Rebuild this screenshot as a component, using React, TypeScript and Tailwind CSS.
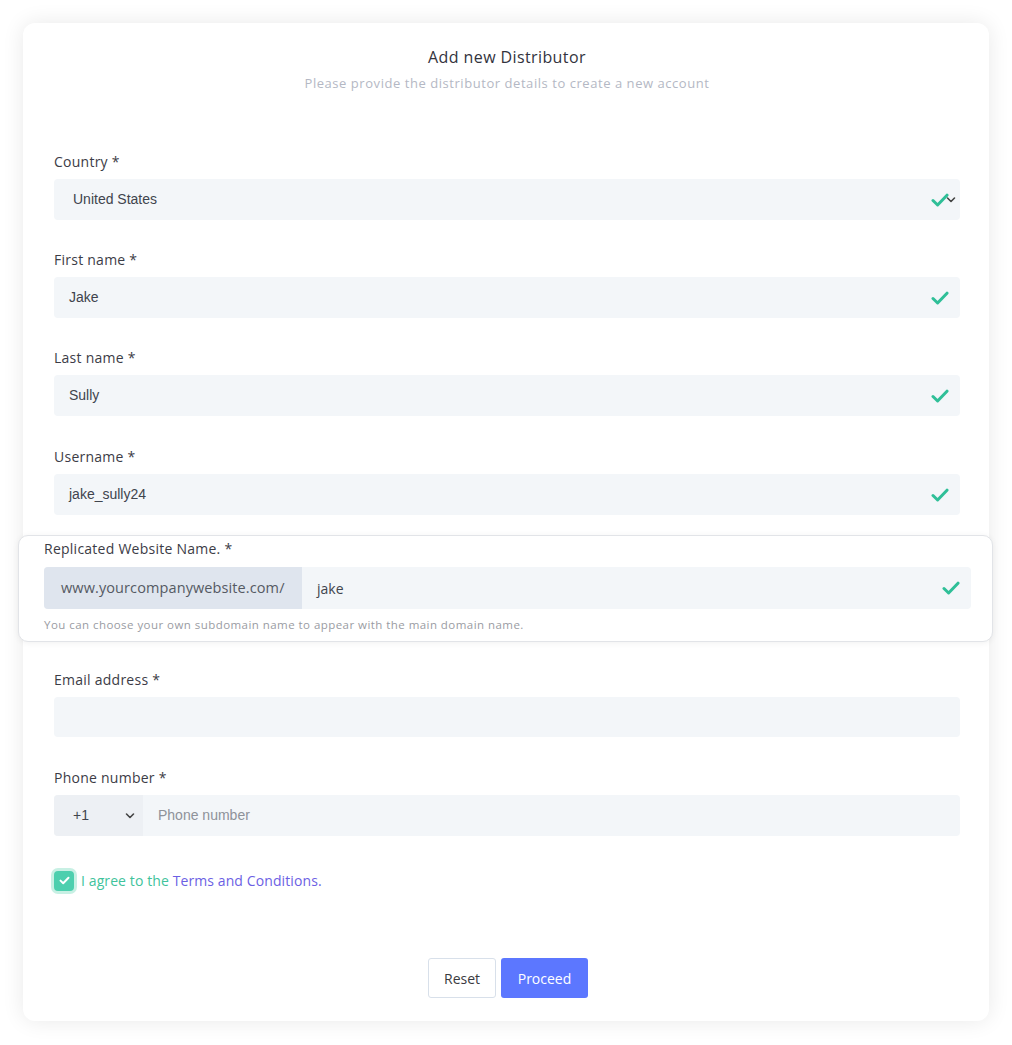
import React from "react";

const poppins = { fontFamily: "'Open Sans', 'Noto Sans', sans-serif" };

function Check({ className = "" }: { className?: string }) {
  return (
    <svg className={className} width="18" height="14" viewBox="0 0 18 14" fill="none">
      <path d="M2 7.5 L6.6 12 L16 2.2" stroke="#2fbf98" strokeWidth="3" strokeLinecap="round" strokeLinejoin="round" />
    </svg>
  );
}

function Label({ children }: { children: React.ReactNode }) {
  return (
    <div className="text-[14px] tracking-[0.25px] leading-[20px] text-[#3c3c46] mb-[7px] font-['Open_Sans',sans-serif]">
      {children}
    </div>
  );
}

function Field({ label, value, mt }: { label: string; value?: string; mt: string }) {
  return (
    <div className={mt}>
      <Label>{label}</Label>
      <div className="h-[41px] rounded-[4px] bg-[#f3f6f9] flex items-center pl-[15px] pr-[11px]">
        <span className="flex-1 text-[14px] text-[#40444d] font-['Liberation_Sans',Arial,sans-serif]">{value}</span>
        {value !== undefined && <Check />}
      </div>
    </div>
  );
}

export default function App() {
  return (
    <div className="bg-white p-[23px] w-[1012px] min-h-[1045px]">
      <div className="w-[966px] rounded-[12px] bg-white shadow-[0_0_22px_rgba(0,0,0,0.09)] pt-[22px] pb-[23px] pl-[31px] pr-[29px]">
        <div className="text-center" style={poppins}>
          <div className="text-[16px] tracking-[0.4px] leading-[24px] font-medium text-[#33333d]">Add new Distributor</div>
          <div className="text-[13px] tracking-[0.55px] leading-[20px] mt-[4px] text-[#b4b8c4]">
            Please provide the distributor details to create a new account
          </div>
        </div>

        <div className="mt-[59px]">
          <Label>Country *</Label>
          <div className="h-[41px] rounded-[4px] bg-[#f3f6f9] flex items-center pl-[19px] pr-[4px] relative">
            <span className="flex-1 text-[14px] text-[#40444d] font-['Liberation_Sans',Arial,sans-serif]">United States</span>
            <svg className="absolute right-[4px] top-[17px]" width="10" height="8" viewBox="0 0 10 8" fill="none">
              <path d="M1.5 2 L5 5.5 L8.5 2" stroke="#444" strokeWidth="1.6" strokeLinecap="round" strokeLinejoin="round" />
            </svg>
            <Check className="relative mr-[7px]" />
          </div>
        </div>

        <Field label="First name *" value="Jake" mt="mt-[30px]" />
        <Field label="Last name *" value="Sully" mt="mt-[30px]" />
        <Field label="Username *" value="jake_sully24" mt="mt-[31px]" />

        <div className="mt-[20px] ml-[-36px] mr-[-33px] rounded-[10px] border border-[#e2e4e8] bg-white shadow-[0_1px_6px_rgba(0,0,0,0.06)] pt-[3px] pb-[8px] pl-[25px] pr-[21px]">
          <div className="text-[14px] tracking-[0.25px] leading-[20px] text-[#3c3c46] mb-[8px] font-['Open_Sans',sans-serif]">
            Replicated Website Name. *
          </div>
          <div className="h-[42px] flex rounded-[4px] overflow-hidden bg-[#f3f6f9]">
            <div className="w-[258px] bg-[#dfe5ee] flex items-center pl-[17px] text-[14.5px] tracking-[0.1px] text-[#555a63] font-['Open_Sans',sans-serif]">
              www.yourcompanywebsite.com/
            </div>
            <div className="flex-1 flex items-center pl-[15px] pr-[11px]">
              <span className="flex-1 text-[14px] text-[#40444d] font-['Open_Sans',sans-serif]">jake</span>
              <Check />
            </div>
          </div>
          <div className="mt-[8px] text-[11.5px] tracking-[0.45px] leading-[16px] text-[#9a9ca3] font-['Open_Sans',sans-serif]">
            You can choose your own subdomain name to appear with the main domain name.
          </div>
        </div>

        <div className="mt-[28px]">
          <Label>Email address *</Label>
          <div className="h-[40px] rounded-[4px] bg-[#f3f6f9]" />
        </div>

        <div className="mt-[31px]">
          <Label>Phone number *</Label>
          <div className="h-[41px] rounded-[4px] bg-[#f3f6f9] flex overflow-hidden">
            <div className="w-[89px] bg-[#edf0f4] flex items-center pl-[19px] pr-[8px]">
              <span className="flex-1 text-[14px] text-[#40444d] font-['Liberation_Sans',Arial,sans-serif]">+1</span>
              <svg width="10" height="8" viewBox="0 0 10 8" fill="none">
                <path d="M1.5 2 L5 5.5 L8.5 2" stroke="#444" strokeWidth="1.6" strokeLinecap="round" strokeLinejoin="round" />
              </svg>
            </div>
            <div className="flex-1 flex items-center pl-[15px] text-[14px] text-[#8e929a] font-['Liberation_Sans',Arial,sans-serif]">
              Phone number
            </div>
          </div>
        </div>

        <div className="mt-[34px] flex items-center">
          <div className="w-[20px] h-[20px] rounded-[4px] bg-[#4dcfae] ring-[3px] ring-[#c8f0e4] flex items-center justify-center">
            <svg width="11" height="9" viewBox="0 0 11 9" fill="none">
              <path d="M1.5 4.6 L4.2 7.2 L9.5 1.8" stroke="white" strokeWidth="2" strokeLinecap="round" strokeLinejoin="round" />
            </svg>
          </div>
          <span className="ml-[7px] text-[14px] tracking-[0.1px] font-['Open_Sans',sans-serif]">
            <span className="text-[#3fc39c]">I agree to the </span>
            <span className="text-[#6c5fe4]">Terms and Conditions.</span>
          </span>
        </div>

        <div className="mt-[67px] flex justify-center gap-[5px] pl-[2px]">
          <button className="w-[68px] h-[40px] rounded-[3px] border border-[#d8e0ea] bg-white text-[14px] text-[#3a3a40] font-['Open_Sans',sans-serif]">
            Reset
          </button>
          <button className="w-[87px] h-[40px] rounded-[3px] bg-[#5c77ff] text-[14px] text-white font-['Open_Sans',sans-serif]">
            Proceed
          </button>
        </div>
      </div>
    </div>
  );
}
